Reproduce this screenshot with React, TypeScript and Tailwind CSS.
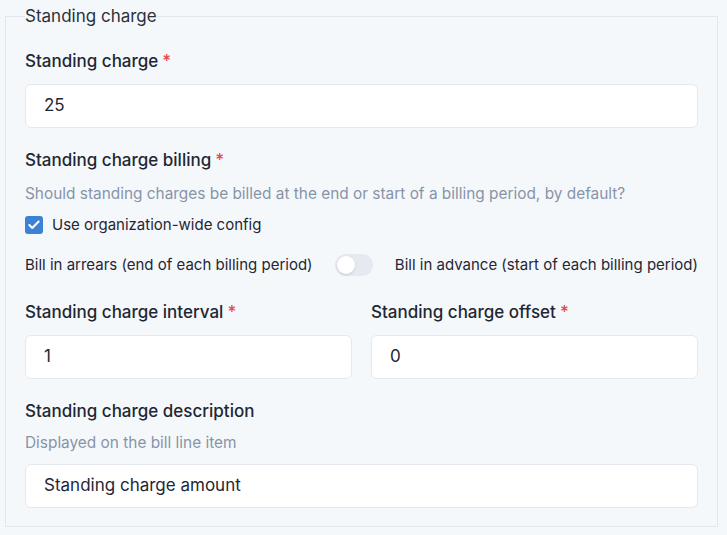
import { Check } from "lucide-react";

const font = { fontFamily: "Inter, 'Noto Sans', sans-serif" };

function Label({ text, required }: { text: string; required?: boolean }) {
    return (
        <div className="text-[17px] leading-6 font-medium text-[#1f2733]">
            {text}
            {required && <span className="text-[#e5484d] ml-1">*</span>}
        </div>
    );
}

function Input({ value }: { value: string }) {
    return (
        <div className="h-[44px] flex items-center bg-white border border-[#e4e8ef] rounded-md px-[18px] text-[17px] text-[#1f2733]">
            {value}
        </div>
    );
}

export default function App() {
    return (
        <div className="min-h-screen bg-[#f5f8fb] pt-[4px]" style={font}>
            <fieldset className="mx-[5px] w-[713px] border border-[#e2e7ee] px-[19px] pt-[21px] pb-[18px]">
                <legend className="text-[17px] leading-6 text-[#2a313c]">Standing charge</legend>

                <Label text="Standing charge" required />
                <div className="mt-[11px]">
                    <Input value="25" />
                </div>

                <div className="mt-[20px]">
                    <Label text="Standing charge billing" required />
                </div>
                <p className="mt-[12px] text-[15.4px] leading-5 text-[#8794a8]">
                    Should standing charges be billed at the end or start of a billing period, by default?
                </p>
                <div className="mt-[11px] flex items-center gap-[9px] h-5">
                    <span className="w-[18px] h-[18px] rounded-[3px] bg-[#3b82d6] flex items-center justify-center">
                        <Check className="w-[14px] h-[14px] text-white" strokeWidth={3.5} />
                    </span>
                    <span className="text-[15px] text-[#1f2733]">Use organization-wide config</span>
                </div>
                <div className="mt-[18px] flex items-center justify-between h-6 text-[15px] text-[#1f2733]">
                    <span>Bill in arrears (end of each billing period)</span>
                    <span className="w-[38px] h-[22px] rounded-full bg-[#e6e9ef] p-[2px] flex items-center">
                        <span className="w-[18px] h-[18px] rounded-full bg-white shadow-sm" />
                    </span>
                    <span>Bill in advance (start of each billing period)</span>
                </div>

                <div className="mt-[23px] grid grid-cols-2 gap-x-[19px]">
                    <div>
                        <Label text="Standing charge interval" required />
                        <div className="mt-[11px]">
                            <Input value="1" />
                        </div>
                    </div>
                    <div>
                        <Label text="Standing charge offset" required />
                        <div className="mt-[11px]">
                            <Input value="0" />
                        </div>
                    </div>
                </div>

                <div className="mt-[20px]">
                    <Label text="Standing charge description" />
                </div>
                <p className="mt-[10px] text-[15.4px] leading-5 text-[#8794a8]">Displayed on the bill line item</p>
                <div className="mt-[11px]">
                    <Input value="Standing charge amount" />
                </div>
            </fieldset>
        </div>
    );
}
